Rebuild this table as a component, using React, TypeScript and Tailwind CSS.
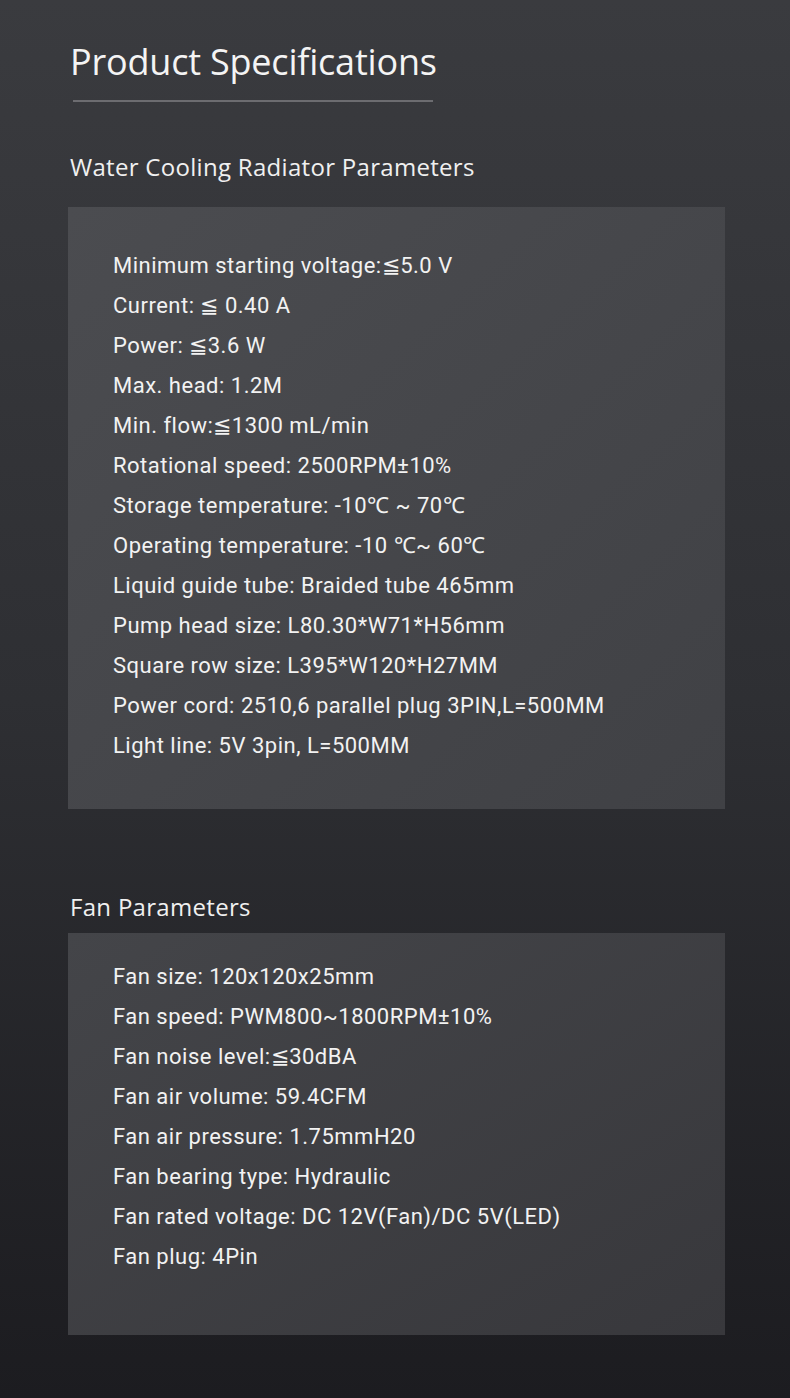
const radiator = [
  "Minimum starting voltage:≦5.0 V",
  "Current: ≦ 0.40 A",
  "Power: ≦3.6 W",
  "Max. head: 1.2M",
  "Min. flow:≦1300 mL/min",
  "Rotational speed: 2500RPM±10%",
  "Storage temperature: -10℃ ~ 70℃",
  "Operating temperature: -10 ℃~ 60℃",
  "Liquid guide tube: Braided tube 465mm",
  "Pump head size: L80.30*W71*H56mm",
  "Square row size: L395*W120*H27MM",
  "Power cord: 2510,6 parallel plug 3PIN,L=500MM",
  "Light line: 5V 3pin, L=500MM",
];

const fan = [
  "Fan size: 120x120x25mm",
  "Fan speed: PWM800~1800RPM±10%",
  "Fan noise level:≦30dBA",
  "Fan air volume: 59.4CFM",
  "Fan air pressure: 1.75mmH20",
  "Fan bearing type: Hydraulic",
  "Fan rated voltage: DC 12V(Fan)/DC 5V(LED)",
  "Fan plug: 4Pin",
];

function SpecList({ items }: { items: string[] }) {
  return (
    <ul className="flex flex-col font-['Roboto',sans-serif] text-[22px] leading-[40px] text-[#f2f2f2] tracking-[0.5px]">
      {items.map((t) => (
        <li key={t}>{t}</li>
      ))}
    </ul>
  );
}

export default function App() {
  return (
    <div className="w-[790px] h-[1398px] bg-gradient-to-b from-[#3a3b3f] via-[#2e2f33] to-[#1c1c20] font-['Open_Sans',sans-serif] text-white">
      <div className="pl-[68px] pt-[38px]">
        <h1 className="pl-[2px] text-[36px] leading-[48px] tracking-[-0.2px] text-[#f4f4f4]">
          Product Specifications
        </h1>
        <div className="ml-[5px] mt-[14px] w-[360px] h-[2px] bg-[#6c6c70]" />

        <h2 className="pl-[2px] mt-[48px] text-[24px] leading-[34px] tracking-[0.3px] text-[#f0f0f0]">
          Water Cooling Radiator Parameters
        </h2>
        <section className="mt-[23px] w-[657px] h-[602px] bg-gradient-to-br from-[#4b4c50] to-[#404145] pl-[45px] pt-[39px]">
          <SpecList items={radiator} />
        </section>

        <h2 className="pl-[2px] mt-[81px] text-[24px] leading-[34px] tracking-[0.3px] text-[#f0f0f0]">
          Fan Parameters
        </h2>
        <section className="mt-[9px] w-[657px] h-[402px] bg-gradient-to-br from-[#444549] to-[#38383c] pl-[45px] pt-[24px]">
          <SpecList items={fan} />
        </section>
      </div>
    </div>
  );
}
